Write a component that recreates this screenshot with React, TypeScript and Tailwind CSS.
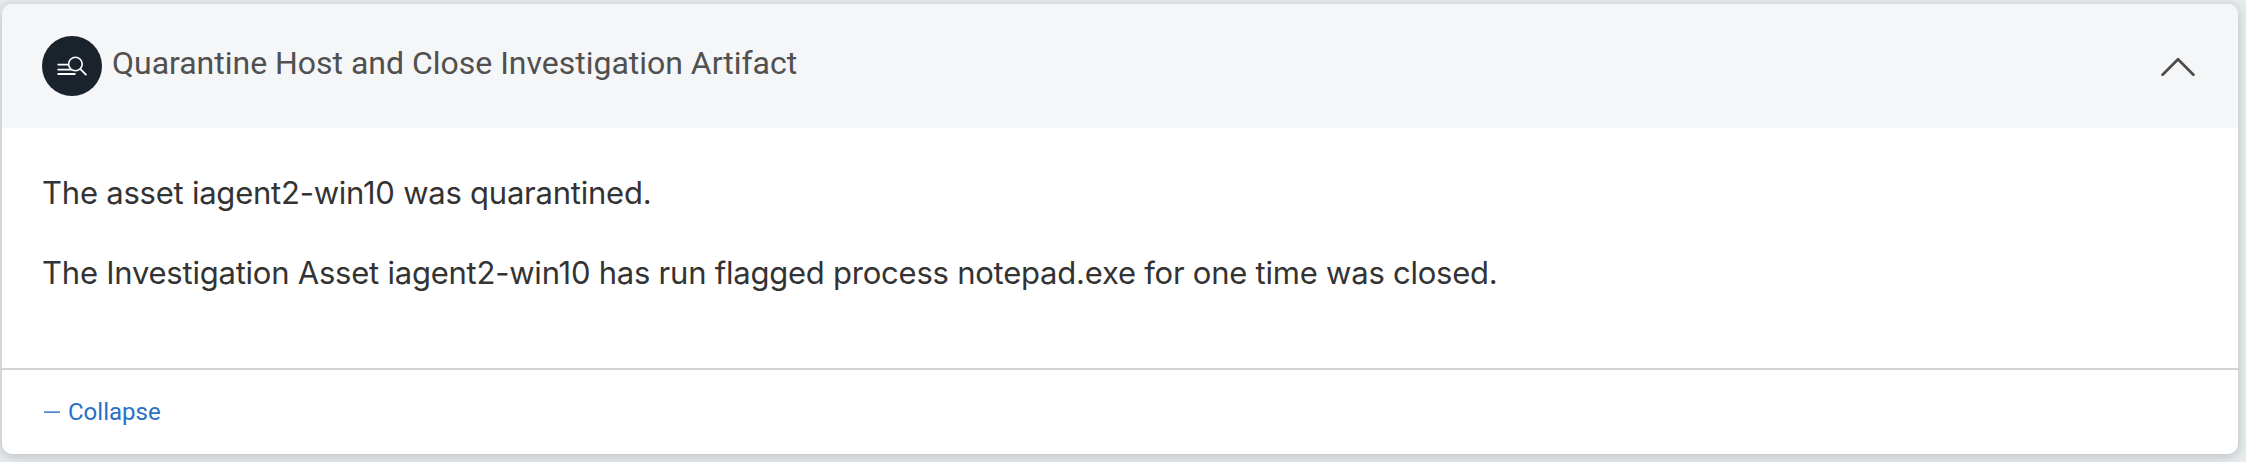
function InvestigationIcon() {
  return (
    <span className="flex size-[60px] shrink-0 items-center justify-center rounded-full bg-[#1a222b]">
      <svg width="30" height="20" viewBox="0 0 30 20" fill="none" stroke="#fff" className="block">
        <path d="M0.5 8.7H12M0.5 13.6H15M0.5 18H18.5" strokeWidth="1.8" />
        <circle cx="18.4" cy="8" r="6.8" fill="#1a222b" strokeWidth="1.6" />
        <path d="M23.2 12.8L29.4 19.2" strokeWidth="1.8" />
      </svg>
    </span>
  );
}

export default function App() {
  return (
    <div className="h-[462px] w-full overflow-hidden bg-[#e6ebee] pt-1 pr-2 pl-0.5">
      <section className="flex h-[450px] flex-col rounded-[10px] bg-white shadow-[0_2px_12px_rgba(0,0,0,0.2)]">
        <header className="flex h-[124px] shrink-0 items-center justify-between rounded-t-[10px] bg-[#f4f6f8] pr-[43px] pl-10">
          <div className="flex items-center gap-[10px]">
            <InvestigationIcon />
            <h2 className="pb-[6px] font-[Roboto,sans-serif] text-[32px] leading-[40px] tracking-[-0.015px] text-[#505050]">
              Quarantine Host and Close Investigation Artifact
            </h2>
          </div>
          <button type="button" aria-label="Collapse section">
            <svg width="34" height="20" viewBox="0 0 34 20" fill="none" stroke="#4c4c4c" strokeWidth="2.7" strokeLinecap="round" strokeLinejoin="round" className="block">
              <path d="M1.6 18.7L17 3.3L32.4 18.7" />
            </svg>
          </button>
        </header>
        <div className="flex h-[242px] shrink-0 flex-col gap-10 border-b-2 border-[#d0d4d8] px-10 pt-[45px] font-[Inter,sans-serif] text-[31px] leading-[40px] tracking-[-0.23px] text-[#333]">
          <p>The asset iagent2-win10 was quarantined.</p>
          <p>The Investigation Asset iagent2-win10 has run flagged process notepad.exe for one time was closed.</p>
        </div>
        <footer className="flex flex-1 items-center px-[42px]">
          <button type="button" className="flex items-center gap-2 font-[Roboto,sans-serif] text-2xl text-[#2a70c4]">
            <svg width="16" height="2" viewBox="0 0 16 2" className="block">
              <path d="M0 1.1H16" stroke="currentColor" strokeWidth="1.4" />
            </svg>
            <span>Collapse</span>
          </button>
        </footer>
      </section>
    </div>
  );
}
